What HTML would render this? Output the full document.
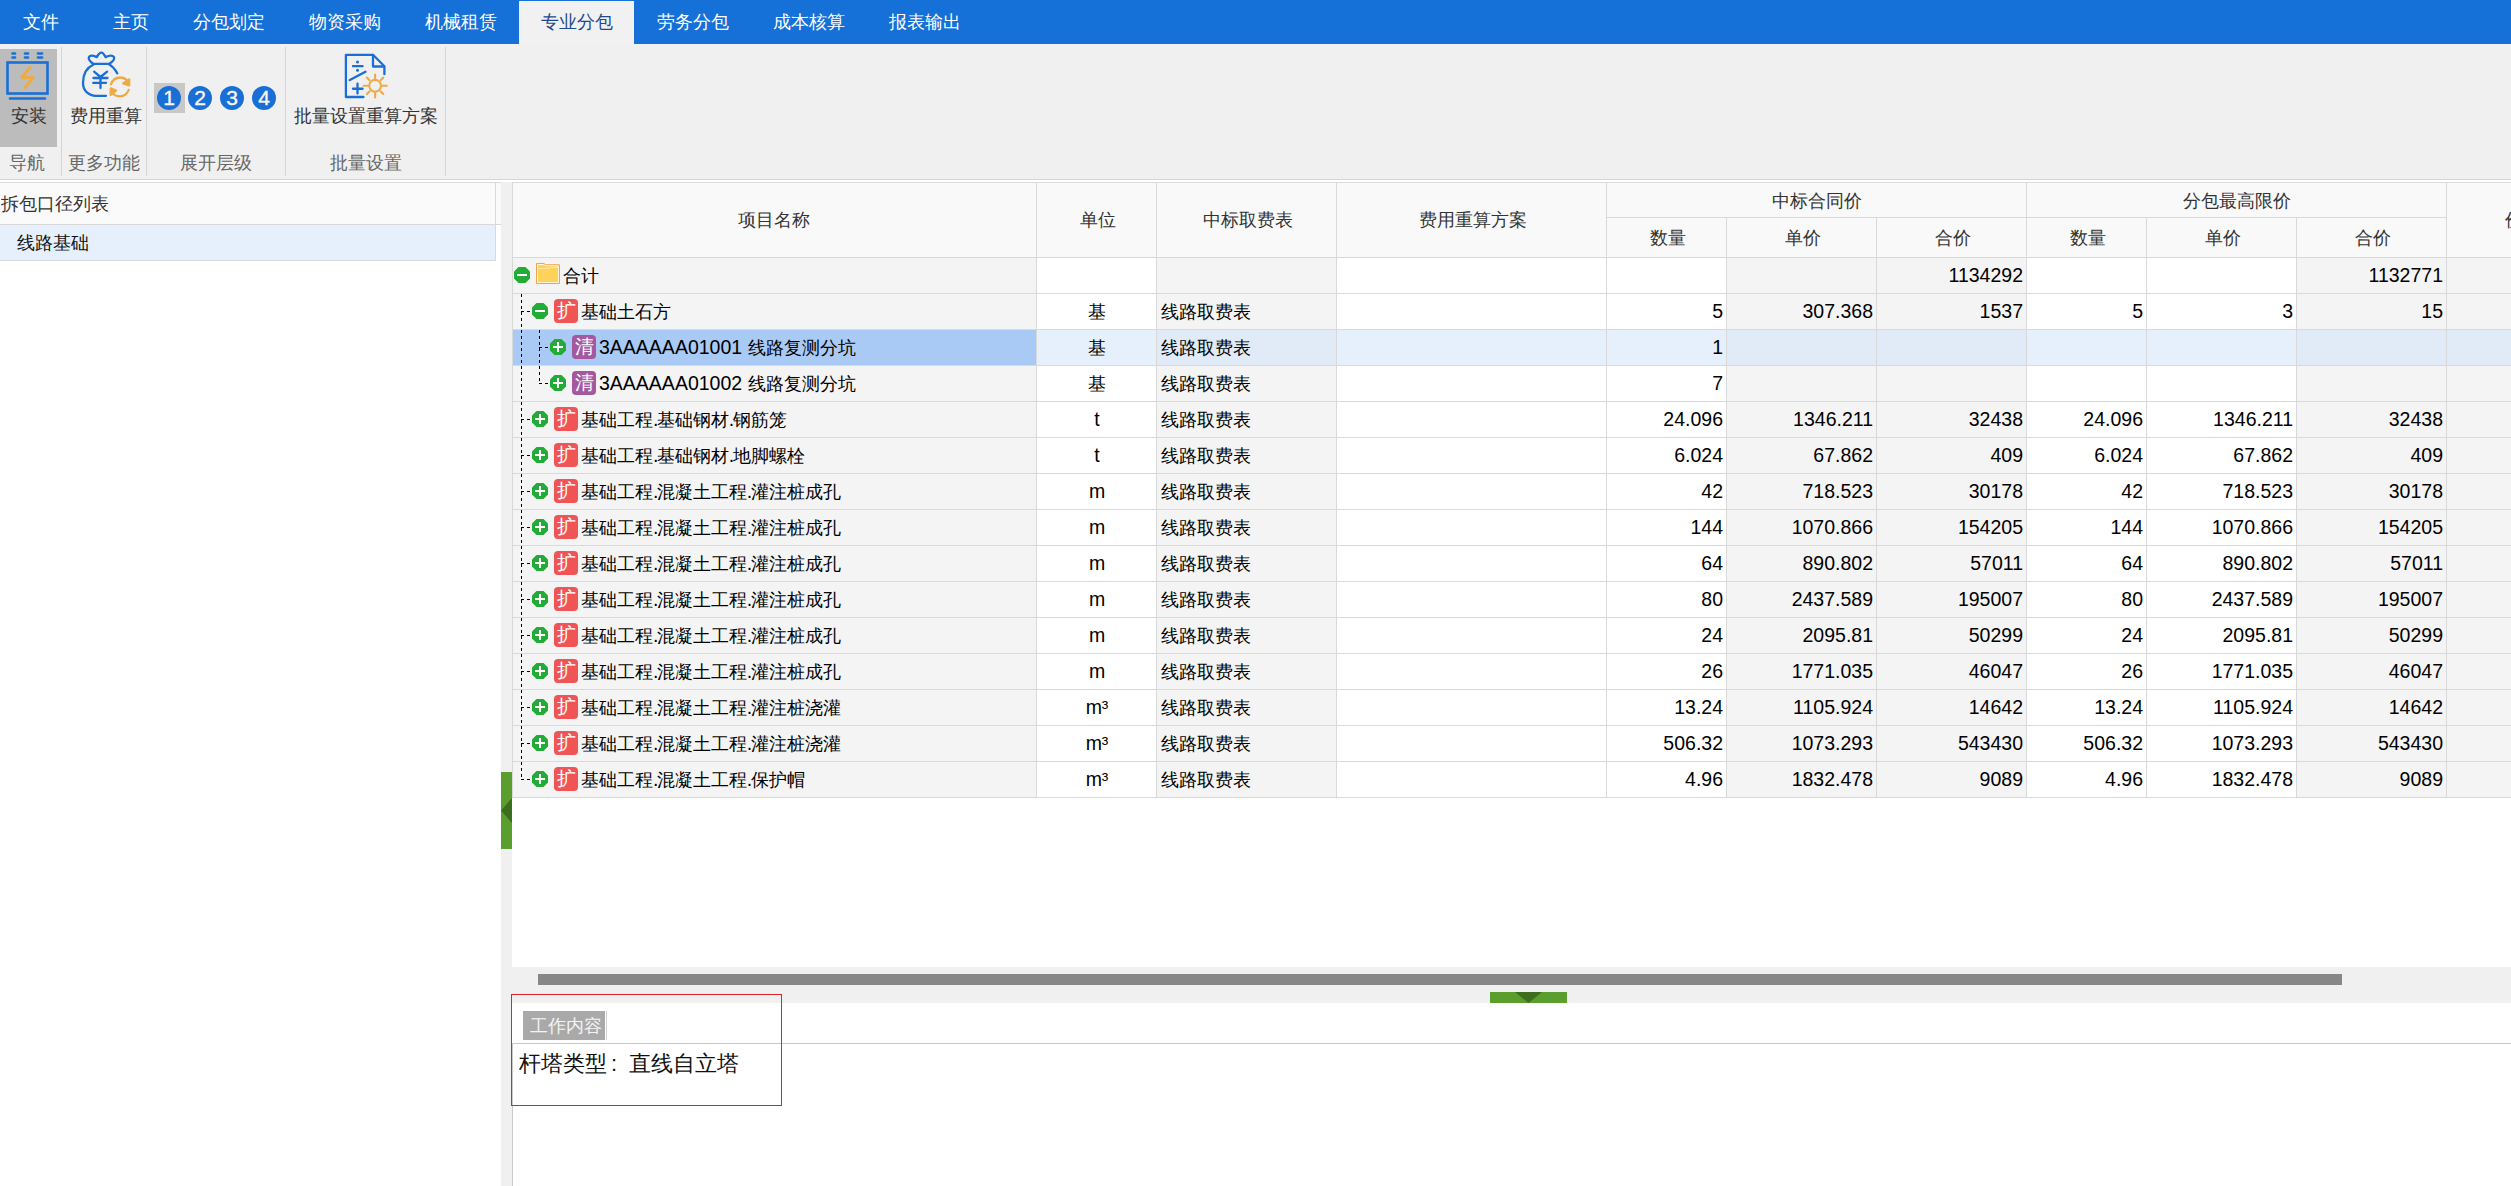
<!DOCTYPE html><html><head><meta charset="utf-8"><style>
html,body{margin:0;padding:0;}
body{width:2511px;height:1186px;overflow:hidden;position:relative;background:#fff;font-family:"Liberation Sans",sans-serif;font-size:19.5px;color:#000;}
body div{position:absolute;box-sizing:border-box;}
.t{white-space:nowrap;overflow:hidden;}
.c{font-size:18px;}
</style></head><body>
<div style="left:0px;top:0px;width:2511px;height:44px;background:#1570d8"></div>
<div style="left:519px;top:1px;width:115px;height:43px;background:#f1f1f1"></div>
<div class="t" style="left:-19px;top:3px;width:120px;height:36px;line-height:36px;text-align:center;color:#ffffff"><span class="c">文件</span></div>
<div class="t" style="left:71px;top:3px;width:120px;height:36px;line-height:36px;text-align:center;color:#ffffff"><span class="c">主页</span></div>
<div class="t" style="left:169px;top:3px;width:120px;height:36px;line-height:36px;text-align:center;color:#ffffff"><span class="c">分包划定</span></div>
<div class="t" style="left:285px;top:3px;width:120px;height:36px;line-height:36px;text-align:center;color:#ffffff"><span class="c">物资采购</span></div>
<div class="t" style="left:401px;top:3px;width:120px;height:36px;line-height:36px;text-align:center;color:#ffffff"><span class="c">机械租赁</span></div>
<div class="t" style="left:517px;top:3px;width:120px;height:36px;line-height:36px;text-align:center;color:#1f4a8e"><span class="c">专业分包</span></div>
<div class="t" style="left:633px;top:3px;width:120px;height:36px;line-height:36px;text-align:center;color:#ffffff"><span class="c">劳务分包</span></div>
<div class="t" style="left:749px;top:3px;width:120px;height:36px;line-height:36px;text-align:center;color:#ffffff"><span class="c">成本核算</span></div>
<div class="t" style="left:865px;top:3px;width:120px;height:36px;line-height:36px;text-align:center;color:#ffffff"><span class="c">报表输出</span></div>
<div style="left:0px;top:44px;width:2511px;height:135px;background:#f0f0f0"></div>
<div style="left:0px;top:179px;width:2511px;height:1px;background:#d6d6d6"></div>
<div style="left:61px;top:47px;width:1px;height:129px;background:#d5d5d5"></div>
<div style="left:146px;top:47px;width:1px;height:129px;background:#d5d5d5"></div>
<div style="left:285px;top:47px;width:1px;height:129px;background:#d5d5d5"></div>
<div style="left:445px;top:47px;width:1px;height:129px;background:#d5d5d5"></div>
<div style="left:0px;top:49px;width:57px;height:98px;background:#bcbcbc"></div>
<div class="t" style="left:0px;top:99px;width:57px;height:32px;line-height:32px;text-align:center;color:#333"><span class="c">安装</span></div>
<div class="t" style="left:64px;top:99px;width:84px;height:32px;line-height:32px;text-align:center;color:#333"><span class="c">费用重算</span></div>
<div class="t" style="left:286px;top:99px;width:159px;height:32px;line-height:32px;text-align:center;color:#333"><span class="c">批量设置重算方案</span></div>
<div class="t" style="left:-4px;top:146px;width:61px;height:32px;line-height:32px;text-align:center;color:#666"><span class="c">导航</span></div>
<div class="t" style="left:62px;top:146px;width:84px;height:32px;line-height:32px;text-align:center;color:#666"><span class="c">更多功能</span></div>
<div class="t" style="left:147px;top:146px;width:138px;height:32px;line-height:32px;text-align:center;color:#666"><span class="c">展开层级</span></div>
<div class="t" style="left:286px;top:146px;width:159px;height:32px;line-height:32px;text-align:center;color:#666"><span class="c">批量设置</span></div>
<div style="left:154px;top:83px;width:31px;height:30px;background:#c8c8c8"></div>
<div style="left:157px;top:86px;width:24px;height:24px;border-radius:12px;background:#1a6fd6;color:#fbf8f2;font-size:21px;line-height:23px;text-align:center;-webkit-text-stroke:0.35px #fbf8f2">1</div>
<div style="left:188px;top:86px;width:24px;height:24px;border-radius:12px;background:#1a6fd6;color:#fbf8f2;font-size:21px;line-height:23px;text-align:center;-webkit-text-stroke:0.35px #fbf8f2">2</div>
<div style="left:220px;top:86px;width:24px;height:24px;border-radius:12px;background:#1a6fd6;color:#fbf8f2;font-size:21px;line-height:23px;text-align:center;-webkit-text-stroke:0.35px #fbf8f2">3</div>
<div style="left:252px;top:86px;width:24px;height:24px;border-radius:12px;background:#1a6fd6;color:#fbf8f2;font-size:21px;line-height:23px;text-align:center;-webkit-text-stroke:0.35px #fbf8f2">4</div>
<svg style="position:absolute;left:0;top:44px" width="150" height="60" viewBox="0 0 150 60">
<g fill="none" stroke="#1a6fd6" stroke-width="2.6" stroke-linecap="round">
<line x1="12.5" y1="9.5" x2="15" y2="9.5"/><line x1="25" y1="9.5" x2="28" y2="9.5"/><line x1="38" y1="9.5" x2="42" y2="9.5"/>
<line x1="12.5" y1="13.5" x2="15" y2="13.5"/><line x1="25" y1="13.5" x2="28" y2="13.5"/><line x1="38" y1="13.5" x2="42" y2="13.5"/>
<rect x="7.5" y="18.5" width="40" height="31"/>
<line x1="10" y1="54.5" x2="45" y2="54.5"/>
</g>
<path d="M30 23.5 L21.8 33.5 L33.2 33.5 L25 43.5" fill="none" stroke="#eeaa44" stroke-width="2.8" stroke-linecap="round" stroke-linejoin="round"/>
</svg>
<svg style="position:absolute;left:70px;top:44px" width="75" height="60" viewBox="0 0 75 60">
<g fill="none" stroke="#1a6fd6" stroke-width="2.3" stroke-linecap="round" stroke-linejoin="round">
<path d="M23.2 19.8 C20 17.5 18 15 19 13 C20 11 23 11.5 26.8 13.1 C28.5 10 30 8.6 31.4 8.6 C32.8 8.6 34 10 35.5 13.1 C39 11.5 42.5 11 44 13.2 C45 15.5 42 18 39.3 19.8 Z"/>
<path d="M23.2 20.8 C16 24 13 31 13 39 C13 47 19 51.8 26 51.8 L36 51.8"/>
<path d="M39.6 20.8 C43 22.5 45 25.5 47.3 29.3"/>
<path d="M24.1 27.7 L30.5 33 L37.1 27.7 M30.5 33 L30.5 44 M23.4 34 L37.5 34 M23.2 38.8 L36 38.8"/>
</g>
<g fill="none" stroke="#eeaa44" stroke-width="2.3" stroke-linecap="round" stroke-linejoin="round">
<path d="M41 40.4 C42.5 36 46 33.5 50 33.5 C54 33.5 57 35.5 58.7 38.6"/>
<path d="M59.2 35.4 L59.2 41.3 L53.2 39.5 Z" fill="#eeaa44"/>
<path d="M58.7 45.9 C57 50 54 52.3 50 52.3 C46 52.3 43 50.5 41.3 47.5"/>
<path d="M40.8 44.3 L46 46.5 L40.6 50.8 Z" fill="#eeaa44"/>
</g>
</svg>
<svg style="position:absolute;left:330px;top:44px" width="75" height="60" viewBox="0 0 75 60">
<g fill="none" stroke="#1a6fd6" stroke-width="2.3" stroke-linecap="round" stroke-linejoin="round">
<path d="M33.5 53 L15.9 53 L15.9 10.8 L43 10.8 L54.4 22.2 L54.4 30.2"/>
<path d="M43 11 L43 22.5 L54 22.5"/>
<path d="M23 22.2 L32.6 22.2 M19.8 36.1 L35.5 27.7"/>
<path d="M23 44.75 L32.6 44.75 M27.5 39.7 L27.5 49.5"/>
</g>
<circle cx="27.5" cy="17.9" r="1.5" fill="#1a6fd6"/><circle cx="27.5" cy="26.3" r="1.5" fill="#1a6fd6"/>
<g fill="none" stroke="#eeaa44" stroke-width="2.1" stroke-linecap="round">
<circle cx="45.1" cy="41.8" r="5.9"/>
<path d="M45.1 30.5 V34.5 M45.1 49 V53.5 M33.5 41.8 H37.5 M52.7 41.8 H56.8 M36.9 33.6 L39.5 36.2 M50.7 47.4 L53.3 50 M53.3 33.6 L50.7 36.2 M39.5 47.4 L36.9 50"/>
</g>
</svg>
<div style="left:0px;top:182px;width:501px;height:1px;background:#d9d9d9"></div>
<div style="left:0px;top:183px;width:501px;height:41px;background:#fafafa"></div>
<div style="left:0px;top:224px;width:501px;height:1px;background:#d9d9d9"></div>
<div style="left:0px;top:225px;width:495px;height:35px;background:#e6f0fc"></div>
<div style="left:0px;top:260px;width:496px;height:1px;background:#d9d9d9"></div>
<div style="left:495px;top:183px;width:1px;height:77px;background:#d9d9d9"></div>
<div class="t" style="left:1px;top:183px;width:200px;height:41px;line-height:41px;color:#333"><span class="c">拆包口径列表</span></div>
<div class="t" style="left:17px;top:225px;width:200px;height:35px;line-height:35px;color:#111"><span class="c">线路基础</span></div>
<div style="left:501px;top:182px;width:11px;height:1004px;background:#f0f0f0"></div>
<div style="left:501px;top:772px;width:11px;height:77px;background:#5a9e2e"></div>
<svg style="position:absolute;left:501px;top:798px" width="11" height="25"><path d="M11 0 L0 12.5 L11 25Z" fill="#3c6e1e"/></svg>
<div style="left:512px;top:182px;width:1999px;height:785px;background:#fff"></div>
<div style="left:512px;top:182px;width:1999px;height:75px;background:#f9f9f9"></div>
<div style="left:512px;top:182px;width:1999px;height:1px;background:#d9d9d9"></div>
<div style="left:1606px;top:217px;width:840px;height:1px;background:#d9d9d9"></div>
<div style="left:512px;top:257px;width:1999px;height:1px;background:#d9d9d9"></div>
<div style="left:512px;top:182px;width:1px;height:75px;background:#d9d9d9"></div>
<div style="left:1036px;top:182px;width:1px;height:75px;background:#d9d9d9"></div>
<div style="left:1156px;top:182px;width:1px;height:75px;background:#d9d9d9"></div>
<div style="left:1336px;top:182px;width:1px;height:75px;background:#d9d9d9"></div>
<div style="left:1606px;top:182px;width:1px;height:75px;background:#d9d9d9"></div>
<div style="left:1726px;top:217px;width:1px;height:40px;background:#d9d9d9"></div>
<div style="left:1876px;top:217px;width:1px;height:40px;background:#d9d9d9"></div>
<div style="left:2026px;top:182px;width:1px;height:75px;background:#d9d9d9"></div>
<div style="left:2146px;top:217px;width:1px;height:40px;background:#d9d9d9"></div>
<div style="left:2296px;top:217px;width:1px;height:40px;background:#d9d9d9"></div>
<div style="left:2446px;top:182px;width:1px;height:75px;background:#d9d9d9"></div>
<div class="t" style="left:512px;top:182px;width:524px;height:75px;line-height:75px;color:#333;text-align:center"><span class="c">项目名称</span></div>
<div class="t" style="left:1038px;top:182px;width:120px;height:75px;line-height:75px;color:#333;text-align:center"><span class="c">单位</span></div>
<div class="t" style="left:1158px;top:182px;width:180px;height:75px;line-height:75px;color:#333;text-align:center"><span class="c">中标取费表</span></div>
<div class="t" style="left:1338px;top:182px;width:270px;height:75px;line-height:75px;color:#333;text-align:center"><span class="c">费用重算方案</span></div>
<div class="t" style="left:1607px;top:182px;width:420px;height:36px;line-height:36px;color:#333;text-align:center"><span class="c">中标合同价</span></div>
<div class="t" style="left:2027px;top:182px;width:420px;height:36px;line-height:36px;color:#333;text-align:center"><span class="c">分包最高限价</span></div>
<div class="t" style="left:1608px;top:217px;width:120px;height:40px;line-height:40px;color:#333;text-align:center"><span class="c">数量</span></div>
<div class="t" style="left:1728px;top:217px;width:150px;height:40px;line-height:40px;color:#333;text-align:center"><span class="c">单价</span></div>
<div class="t" style="left:1878px;top:217px;width:150px;height:40px;line-height:40px;color:#333;text-align:center"><span class="c">合价</span></div>
<div class="t" style="left:2028px;top:217px;width:120px;height:40px;line-height:40px;color:#333;text-align:center"><span class="c">数量</span></div>
<div class="t" style="left:2148px;top:217px;width:150px;height:40px;line-height:40px;color:#333;text-align:center"><span class="c">单价</span></div>
<div class="t" style="left:2298px;top:217px;width:150px;height:40px;line-height:40px;color:#333;text-align:center"><span class="c">合价</span></div>
<div class="t" style="left:2446px;top:182px;width:120px;height:75px;line-height:75px;color:#333;text-align:left;padding-left:59px"><span class="c">价</span></div>
<div style="left:513px;top:258px;width:523px;height:35px;background:#f4f4f4"></div>
<div style="left:1037px;top:258px;width:119px;height:35px;background:#ffffff"></div>
<div style="left:1157px;top:258px;width:179px;height:35px;background:#f4f4f4"></div>
<div style="left:1337px;top:258px;width:269px;height:35px;background:#ffffff"></div>
<div style="left:1607px;top:258px;width:119px;height:35px;background:#ffffff"></div>
<div style="left:1727px;top:258px;width:149px;height:35px;background:#f4f4f4"></div>
<div style="left:1877px;top:258px;width:149px;height:35px;background:#f4f4f4"></div>
<div style="left:2027px;top:258px;width:119px;height:35px;background:#ffffff"></div>
<div style="left:2147px;top:258px;width:149px;height:35px;background:#ffffff"></div>
<div style="left:2297px;top:258px;width:149px;height:35px;background:#f4f4f4"></div>
<div style="left:2447px;top:258px;width:64px;height:35px;background:#f4f4f4"></div>
<div style="left:512px;top:293px;width:1999px;height:1px;background:#d9d9d9"></div>
<div style="left:512px;top:257px;width:1px;height:37px;background:#d9d9d9"></div>
<div style="left:1036px;top:257px;width:1px;height:37px;background:#d9d9d9"></div>
<div style="left:1156px;top:257px;width:1px;height:37px;background:#d9d9d9"></div>
<div style="left:1336px;top:257px;width:1px;height:37px;background:#d9d9d9"></div>
<div style="left:1606px;top:257px;width:1px;height:37px;background:#d9d9d9"></div>
<div style="left:1726px;top:257px;width:1px;height:37px;background:#d9d9d9"></div>
<div style="left:1876px;top:257px;width:1px;height:37px;background:#d9d9d9"></div>
<div style="left:2026px;top:257px;width:1px;height:37px;background:#d9d9d9"></div>
<div style="left:2146px;top:257px;width:1px;height:37px;background:#d9d9d9"></div>
<div style="left:2296px;top:257px;width:1px;height:37px;background:#d9d9d9"></div>
<div style="left:2446px;top:257px;width:1px;height:37px;background:#d9d9d9"></div>
<svg style="position:absolute;left:514px;top:264px" width="18" height="22"><g transform="translate(0,3)"><polygon points="4.5,0 11.5,0 16,4.5 16,11.5 11.5,16 4.5,16 0,11.5 0,4.5" fill="#22ab37"/></g><rect x="3" y="10" width="10" height="2" fill="#fff"/></svg>
<svg style="position:absolute;left:536px;top:263px" width="24" height="22"><path d="M0.5 0.5 H8 L9.5 1.8 H23.5 V20.5 H0.5Z" fill="#ffd35a" stroke="#f0a24c" stroke-width="1"/><path d="M1.5 1.5 H7.6 L9.1 2.8 H22.5 V19.5 H1.5Z" fill="none" stroke="#fff6dc" stroke-width="1"/><path d="M2 5.5 H14 L15 4.5 H22" fill="none" stroke="#ffe9a0" stroke-width="1"/></svg>
<div class="t" style="left:563px;top:258px;width:300px;height:35px;line-height:35px;color:#000"><span class="c">合计</span></div>
<div class="t" style="left:1037px;top:258px;width:120px;height:35px;line-height:35px;text-align:center"></div>
<div class="t" style="left:1161px;top:258px;width:170px;height:35px;line-height:35px;"></div>
<div class="t" style="left:1876px;top:258px;width:147px;height:35px;line-height:35px;text-align:right">1134292</div>
<div class="t" style="left:2296px;top:258px;width:147px;height:35px;line-height:35px;text-align:right">1132771</div>
<div style="left:513px;top:294px;width:523px;height:35px;background:#f4f4f4"></div>
<div style="left:1037px;top:294px;width:119px;height:35px;background:#ffffff"></div>
<div style="left:1157px;top:294px;width:179px;height:35px;background:#f4f4f4"></div>
<div style="left:1337px;top:294px;width:269px;height:35px;background:#ffffff"></div>
<div style="left:1607px;top:294px;width:119px;height:35px;background:#ffffff"></div>
<div style="left:1727px;top:294px;width:149px;height:35px;background:#f4f4f4"></div>
<div style="left:1877px;top:294px;width:149px;height:35px;background:#f4f4f4"></div>
<div style="left:2027px;top:294px;width:119px;height:35px;background:#ffffff"></div>
<div style="left:2147px;top:294px;width:149px;height:35px;background:#ffffff"></div>
<div style="left:2297px;top:294px;width:149px;height:35px;background:#f4f4f4"></div>
<div style="left:2447px;top:294px;width:64px;height:35px;background:#f4f4f4"></div>
<div style="left:512px;top:329px;width:1999px;height:1px;background:#d9d9d9"></div>
<div style="left:512px;top:293px;width:1px;height:37px;background:#d9d9d9"></div>
<div style="left:1036px;top:293px;width:1px;height:37px;background:#d9d9d9"></div>
<div style="left:1156px;top:293px;width:1px;height:37px;background:#d9d9d9"></div>
<div style="left:1336px;top:293px;width:1px;height:37px;background:#d9d9d9"></div>
<div style="left:1606px;top:293px;width:1px;height:37px;background:#d9d9d9"></div>
<div style="left:1726px;top:293px;width:1px;height:37px;background:#d9d9d9"></div>
<div style="left:1876px;top:293px;width:1px;height:37px;background:#d9d9d9"></div>
<div style="left:2026px;top:293px;width:1px;height:37px;background:#d9d9d9"></div>
<div style="left:2146px;top:293px;width:1px;height:37px;background:#d9d9d9"></div>
<div style="left:2296px;top:293px;width:1px;height:37px;background:#d9d9d9"></div>
<div style="left:2446px;top:293px;width:1px;height:37px;background:#d9d9d9"></div>
<svg style="position:absolute;left:532px;top:300px" width="18" height="22"><g transform="translate(0,3)"><polygon points="4.5,0 11.5,0 16,4.5 16,11.5 11.5,16 4.5,16 0,11.5 0,4.5" fill="#22ab37"/></g><rect x="3" y="10" width="10" height="2" fill="#fff"/></svg>
<div style="left:554px;top:299px;width:24px;height:24px;border-radius:4px;background:#f05454;color:#fff;font-size:19px;line-height:24px;text-align:center">扩</div>
<div class="t" style="left:581px;top:294px;width:420px;height:35px;line-height:35px;color:#000"><span class="c">基础土石方</span></div>
<div class="t" style="left:1037px;top:294px;width:120px;height:35px;line-height:35px;text-align:center"><span class="c">基</span></div>
<div class="t" style="left:1161px;top:294px;width:170px;height:35px;line-height:35px;"><span class="c">线路取费表</span></div>
<div class="t" style="left:1606px;top:294px;width:117px;height:35px;line-height:35px;text-align:right">5</div>
<div class="t" style="left:1726px;top:294px;width:147px;height:35px;line-height:35px;text-align:right">307.368</div>
<div class="t" style="left:1876px;top:294px;width:147px;height:35px;line-height:35px;text-align:right">1537</div>
<div class="t" style="left:2026px;top:294px;width:117px;height:35px;line-height:35px;text-align:right">5</div>
<div class="t" style="left:2146px;top:294px;width:147px;height:35px;line-height:35px;text-align:right">3</div>
<div class="t" style="left:2296px;top:294px;width:147px;height:35px;line-height:35px;text-align:right">15</div>
<div style="left:513px;top:330px;width:523px;height:35px;background:#aacaf6"></div>
<div style="left:1037px;top:330px;width:119px;height:35px;background:#e6f0fc"></div>
<div style="left:1157px;top:330px;width:179px;height:35px;background:#e1eaf7"></div>
<div style="left:1337px;top:330px;width:269px;height:35px;background:#e6f0fc"></div>
<div style="left:1607px;top:330px;width:119px;height:35px;background:#e6f0fc"></div>
<div style="left:1727px;top:330px;width:149px;height:35px;background:#e1eaf7"></div>
<div style="left:1877px;top:330px;width:149px;height:35px;background:#e1eaf7"></div>
<div style="left:2027px;top:330px;width:119px;height:35px;background:#e6f0fc"></div>
<div style="left:2147px;top:330px;width:149px;height:35px;background:#e6f0fc"></div>
<div style="left:2297px;top:330px;width:149px;height:35px;background:#e1eaf7"></div>
<div style="left:2447px;top:330px;width:64px;height:35px;background:#e1eaf7"></div>
<div style="left:512px;top:365px;width:1999px;height:1px;background:#d9d9d9"></div>
<div style="left:512px;top:329px;width:1px;height:37px;background:#d9d9d9"></div>
<div style="left:1036px;top:329px;width:1px;height:37px;background:#d9d9d9"></div>
<div style="left:1156px;top:329px;width:1px;height:37px;background:#d9d9d9"></div>
<div style="left:1336px;top:329px;width:1px;height:37px;background:#d9d9d9"></div>
<div style="left:1606px;top:329px;width:1px;height:37px;background:#d9d9d9"></div>
<div style="left:1726px;top:329px;width:1px;height:37px;background:#d9d9d9"></div>
<div style="left:1876px;top:329px;width:1px;height:37px;background:#d9d9d9"></div>
<div style="left:2026px;top:329px;width:1px;height:37px;background:#d9d9d9"></div>
<div style="left:2146px;top:329px;width:1px;height:37px;background:#d9d9d9"></div>
<div style="left:2296px;top:329px;width:1px;height:37px;background:#d9d9d9"></div>
<div style="left:2446px;top:329px;width:1px;height:37px;background:#d9d9d9"></div>
<svg style="position:absolute;left:550px;top:336px" width="18" height="22"><g transform="translate(0,3)"><polygon points="4.5,0 11.5,0 16,4.5 16,11.5 11.5,16 4.5,16 0,11.5 0,4.5" fill="#22ab37"/></g><rect x="3" y="10" width="10" height="2" fill="#fff"/><rect x="7" y="6" width="2" height="10" fill="#fff"/></svg>
<div style="left:572px;top:335px;width:24px;height:24px;border-radius:4px;background:#a4589f;color:#fff;font-size:19px;line-height:24px;text-align:center">清</div>
<div class="t" style="left:599px;top:330px;width:420px;height:35px;line-height:35px;color:#000">3AAAAAA01001 <span class="c">线路复测分坑</span></div>
<div class="t" style="left:1037px;top:330px;width:120px;height:35px;line-height:35px;text-align:center"><span class="c">基</span></div>
<div class="t" style="left:1161px;top:330px;width:170px;height:35px;line-height:35px;"><span class="c">线路取费表</span></div>
<div class="t" style="left:1606px;top:330px;width:117px;height:35px;line-height:35px;text-align:right">1</div>
<div style="left:513px;top:366px;width:523px;height:35px;background:#f4f4f4"></div>
<div style="left:1037px;top:366px;width:119px;height:35px;background:#ffffff"></div>
<div style="left:1157px;top:366px;width:179px;height:35px;background:#f4f4f4"></div>
<div style="left:1337px;top:366px;width:269px;height:35px;background:#ffffff"></div>
<div style="left:1607px;top:366px;width:119px;height:35px;background:#ffffff"></div>
<div style="left:1727px;top:366px;width:149px;height:35px;background:#f4f4f4"></div>
<div style="left:1877px;top:366px;width:149px;height:35px;background:#f4f4f4"></div>
<div style="left:2027px;top:366px;width:119px;height:35px;background:#ffffff"></div>
<div style="left:2147px;top:366px;width:149px;height:35px;background:#ffffff"></div>
<div style="left:2297px;top:366px;width:149px;height:35px;background:#f4f4f4"></div>
<div style="left:2447px;top:366px;width:64px;height:35px;background:#f4f4f4"></div>
<div style="left:512px;top:401px;width:1999px;height:1px;background:#d9d9d9"></div>
<div style="left:512px;top:365px;width:1px;height:37px;background:#d9d9d9"></div>
<div style="left:1036px;top:365px;width:1px;height:37px;background:#d9d9d9"></div>
<div style="left:1156px;top:365px;width:1px;height:37px;background:#d9d9d9"></div>
<div style="left:1336px;top:365px;width:1px;height:37px;background:#d9d9d9"></div>
<div style="left:1606px;top:365px;width:1px;height:37px;background:#d9d9d9"></div>
<div style="left:1726px;top:365px;width:1px;height:37px;background:#d9d9d9"></div>
<div style="left:1876px;top:365px;width:1px;height:37px;background:#d9d9d9"></div>
<div style="left:2026px;top:365px;width:1px;height:37px;background:#d9d9d9"></div>
<div style="left:2146px;top:365px;width:1px;height:37px;background:#d9d9d9"></div>
<div style="left:2296px;top:365px;width:1px;height:37px;background:#d9d9d9"></div>
<div style="left:2446px;top:365px;width:1px;height:37px;background:#d9d9d9"></div>
<svg style="position:absolute;left:550px;top:372px" width="18" height="22"><g transform="translate(0,3)"><polygon points="4.5,0 11.5,0 16,4.5 16,11.5 11.5,16 4.5,16 0,11.5 0,4.5" fill="#22ab37"/></g><rect x="3" y="10" width="10" height="2" fill="#fff"/><rect x="7" y="6" width="2" height="10" fill="#fff"/></svg>
<div style="left:572px;top:371px;width:24px;height:24px;border-radius:4px;background:#a4589f;color:#fff;font-size:19px;line-height:24px;text-align:center">清</div>
<div class="t" style="left:599px;top:366px;width:420px;height:35px;line-height:35px;color:#000">3AAAAAA01002 <span class="c">线路复测分坑</span></div>
<div class="t" style="left:1037px;top:366px;width:120px;height:35px;line-height:35px;text-align:center"><span class="c">基</span></div>
<div class="t" style="left:1161px;top:366px;width:170px;height:35px;line-height:35px;"><span class="c">线路取费表</span></div>
<div class="t" style="left:1606px;top:366px;width:117px;height:35px;line-height:35px;text-align:right">7</div>
<div style="left:513px;top:402px;width:523px;height:35px;background:#f4f4f4"></div>
<div style="left:1037px;top:402px;width:119px;height:35px;background:#ffffff"></div>
<div style="left:1157px;top:402px;width:179px;height:35px;background:#f4f4f4"></div>
<div style="left:1337px;top:402px;width:269px;height:35px;background:#ffffff"></div>
<div style="left:1607px;top:402px;width:119px;height:35px;background:#ffffff"></div>
<div style="left:1727px;top:402px;width:149px;height:35px;background:#f4f4f4"></div>
<div style="left:1877px;top:402px;width:149px;height:35px;background:#f4f4f4"></div>
<div style="left:2027px;top:402px;width:119px;height:35px;background:#ffffff"></div>
<div style="left:2147px;top:402px;width:149px;height:35px;background:#ffffff"></div>
<div style="left:2297px;top:402px;width:149px;height:35px;background:#f4f4f4"></div>
<div style="left:2447px;top:402px;width:64px;height:35px;background:#f4f4f4"></div>
<div style="left:512px;top:437px;width:1999px;height:1px;background:#d9d9d9"></div>
<div style="left:512px;top:401px;width:1px;height:37px;background:#d9d9d9"></div>
<div style="left:1036px;top:401px;width:1px;height:37px;background:#d9d9d9"></div>
<div style="left:1156px;top:401px;width:1px;height:37px;background:#d9d9d9"></div>
<div style="left:1336px;top:401px;width:1px;height:37px;background:#d9d9d9"></div>
<div style="left:1606px;top:401px;width:1px;height:37px;background:#d9d9d9"></div>
<div style="left:1726px;top:401px;width:1px;height:37px;background:#d9d9d9"></div>
<div style="left:1876px;top:401px;width:1px;height:37px;background:#d9d9d9"></div>
<div style="left:2026px;top:401px;width:1px;height:37px;background:#d9d9d9"></div>
<div style="left:2146px;top:401px;width:1px;height:37px;background:#d9d9d9"></div>
<div style="left:2296px;top:401px;width:1px;height:37px;background:#d9d9d9"></div>
<div style="left:2446px;top:401px;width:1px;height:37px;background:#d9d9d9"></div>
<svg style="position:absolute;left:532px;top:408px" width="18" height="22"><g transform="translate(0,3)"><polygon points="4.5,0 11.5,0 16,4.5 16,11.5 11.5,16 4.5,16 0,11.5 0,4.5" fill="#22ab37"/></g><rect x="3" y="10" width="10" height="2" fill="#fff"/><rect x="7" y="6" width="2" height="10" fill="#fff"/></svg>
<div style="left:554px;top:407px;width:24px;height:24px;border-radius:4px;background:#f05454;color:#fff;font-size:19px;line-height:24px;text-align:center">扩</div>
<div class="t" style="left:581px;top:402px;width:420px;height:35px;line-height:35px;color:#000"><span class="c">基础工程</span><span style="letter-spacing:-1.6px">.</span><span class="c">基础钢材</span><span style="letter-spacing:-1.6px">.</span><span class="c">钢筋笼</span></div>
<div class="t" style="left:1037px;top:402px;width:120px;height:35px;line-height:35px;text-align:center">t</div>
<div class="t" style="left:1161px;top:402px;width:170px;height:35px;line-height:35px;"><span class="c">线路取费表</span></div>
<div class="t" style="left:1606px;top:402px;width:117px;height:35px;line-height:35px;text-align:right">24.096</div>
<div class="t" style="left:1726px;top:402px;width:147px;height:35px;line-height:35px;text-align:right">1346.211</div>
<div class="t" style="left:1876px;top:402px;width:147px;height:35px;line-height:35px;text-align:right">32438</div>
<div class="t" style="left:2026px;top:402px;width:117px;height:35px;line-height:35px;text-align:right">24.096</div>
<div class="t" style="left:2146px;top:402px;width:147px;height:35px;line-height:35px;text-align:right">1346.211</div>
<div class="t" style="left:2296px;top:402px;width:147px;height:35px;line-height:35px;text-align:right">32438</div>
<div style="left:513px;top:438px;width:523px;height:35px;background:#f4f4f4"></div>
<div style="left:1037px;top:438px;width:119px;height:35px;background:#ffffff"></div>
<div style="left:1157px;top:438px;width:179px;height:35px;background:#f4f4f4"></div>
<div style="left:1337px;top:438px;width:269px;height:35px;background:#ffffff"></div>
<div style="left:1607px;top:438px;width:119px;height:35px;background:#ffffff"></div>
<div style="left:1727px;top:438px;width:149px;height:35px;background:#f4f4f4"></div>
<div style="left:1877px;top:438px;width:149px;height:35px;background:#f4f4f4"></div>
<div style="left:2027px;top:438px;width:119px;height:35px;background:#ffffff"></div>
<div style="left:2147px;top:438px;width:149px;height:35px;background:#ffffff"></div>
<div style="left:2297px;top:438px;width:149px;height:35px;background:#f4f4f4"></div>
<div style="left:2447px;top:438px;width:64px;height:35px;background:#f4f4f4"></div>
<div style="left:512px;top:473px;width:1999px;height:1px;background:#d9d9d9"></div>
<div style="left:512px;top:437px;width:1px;height:37px;background:#d9d9d9"></div>
<div style="left:1036px;top:437px;width:1px;height:37px;background:#d9d9d9"></div>
<div style="left:1156px;top:437px;width:1px;height:37px;background:#d9d9d9"></div>
<div style="left:1336px;top:437px;width:1px;height:37px;background:#d9d9d9"></div>
<div style="left:1606px;top:437px;width:1px;height:37px;background:#d9d9d9"></div>
<div style="left:1726px;top:437px;width:1px;height:37px;background:#d9d9d9"></div>
<div style="left:1876px;top:437px;width:1px;height:37px;background:#d9d9d9"></div>
<div style="left:2026px;top:437px;width:1px;height:37px;background:#d9d9d9"></div>
<div style="left:2146px;top:437px;width:1px;height:37px;background:#d9d9d9"></div>
<div style="left:2296px;top:437px;width:1px;height:37px;background:#d9d9d9"></div>
<div style="left:2446px;top:437px;width:1px;height:37px;background:#d9d9d9"></div>
<svg style="position:absolute;left:532px;top:444px" width="18" height="22"><g transform="translate(0,3)"><polygon points="4.5,0 11.5,0 16,4.5 16,11.5 11.5,16 4.5,16 0,11.5 0,4.5" fill="#22ab37"/></g><rect x="3" y="10" width="10" height="2" fill="#fff"/><rect x="7" y="6" width="2" height="10" fill="#fff"/></svg>
<div style="left:554px;top:443px;width:24px;height:24px;border-radius:4px;background:#f05454;color:#fff;font-size:19px;line-height:24px;text-align:center">扩</div>
<div class="t" style="left:581px;top:438px;width:420px;height:35px;line-height:35px;color:#000"><span class="c">基础工程</span><span style="letter-spacing:-1.6px">.</span><span class="c">基础钢材</span><span style="letter-spacing:-1.6px">.</span><span class="c">地脚螺栓</span></div>
<div class="t" style="left:1037px;top:438px;width:120px;height:35px;line-height:35px;text-align:center">t</div>
<div class="t" style="left:1161px;top:438px;width:170px;height:35px;line-height:35px;"><span class="c">线路取费表</span></div>
<div class="t" style="left:1606px;top:438px;width:117px;height:35px;line-height:35px;text-align:right">6.024</div>
<div class="t" style="left:1726px;top:438px;width:147px;height:35px;line-height:35px;text-align:right">67.862</div>
<div class="t" style="left:1876px;top:438px;width:147px;height:35px;line-height:35px;text-align:right">409</div>
<div class="t" style="left:2026px;top:438px;width:117px;height:35px;line-height:35px;text-align:right">6.024</div>
<div class="t" style="left:2146px;top:438px;width:147px;height:35px;line-height:35px;text-align:right">67.862</div>
<div class="t" style="left:2296px;top:438px;width:147px;height:35px;line-height:35px;text-align:right">409</div>
<div style="left:513px;top:474px;width:523px;height:35px;background:#f4f4f4"></div>
<div style="left:1037px;top:474px;width:119px;height:35px;background:#ffffff"></div>
<div style="left:1157px;top:474px;width:179px;height:35px;background:#f4f4f4"></div>
<div style="left:1337px;top:474px;width:269px;height:35px;background:#ffffff"></div>
<div style="left:1607px;top:474px;width:119px;height:35px;background:#ffffff"></div>
<div style="left:1727px;top:474px;width:149px;height:35px;background:#f4f4f4"></div>
<div style="left:1877px;top:474px;width:149px;height:35px;background:#f4f4f4"></div>
<div style="left:2027px;top:474px;width:119px;height:35px;background:#ffffff"></div>
<div style="left:2147px;top:474px;width:149px;height:35px;background:#ffffff"></div>
<div style="left:2297px;top:474px;width:149px;height:35px;background:#f4f4f4"></div>
<div style="left:2447px;top:474px;width:64px;height:35px;background:#f4f4f4"></div>
<div style="left:512px;top:509px;width:1999px;height:1px;background:#d9d9d9"></div>
<div style="left:512px;top:473px;width:1px;height:37px;background:#d9d9d9"></div>
<div style="left:1036px;top:473px;width:1px;height:37px;background:#d9d9d9"></div>
<div style="left:1156px;top:473px;width:1px;height:37px;background:#d9d9d9"></div>
<div style="left:1336px;top:473px;width:1px;height:37px;background:#d9d9d9"></div>
<div style="left:1606px;top:473px;width:1px;height:37px;background:#d9d9d9"></div>
<div style="left:1726px;top:473px;width:1px;height:37px;background:#d9d9d9"></div>
<div style="left:1876px;top:473px;width:1px;height:37px;background:#d9d9d9"></div>
<div style="left:2026px;top:473px;width:1px;height:37px;background:#d9d9d9"></div>
<div style="left:2146px;top:473px;width:1px;height:37px;background:#d9d9d9"></div>
<div style="left:2296px;top:473px;width:1px;height:37px;background:#d9d9d9"></div>
<div style="left:2446px;top:473px;width:1px;height:37px;background:#d9d9d9"></div>
<svg style="position:absolute;left:532px;top:480px" width="18" height="22"><g transform="translate(0,3)"><polygon points="4.5,0 11.5,0 16,4.5 16,11.5 11.5,16 4.5,16 0,11.5 0,4.5" fill="#22ab37"/></g><rect x="3" y="10" width="10" height="2" fill="#fff"/><rect x="7" y="6" width="2" height="10" fill="#fff"/></svg>
<div style="left:554px;top:479px;width:24px;height:24px;border-radius:4px;background:#f05454;color:#fff;font-size:19px;line-height:24px;text-align:center">扩</div>
<div class="t" style="left:581px;top:474px;width:420px;height:35px;line-height:35px;color:#000"><span class="c">基础工程</span><span style="letter-spacing:-1.6px">.</span><span class="c">混凝土工程</span><span style="letter-spacing:-1.6px">.</span><span class="c">灌注桩成孔</span></div>
<div class="t" style="left:1037px;top:474px;width:120px;height:35px;line-height:35px;text-align:center">m</div>
<div class="t" style="left:1161px;top:474px;width:170px;height:35px;line-height:35px;"><span class="c">线路取费表</span></div>
<div class="t" style="left:1606px;top:474px;width:117px;height:35px;line-height:35px;text-align:right">42</div>
<div class="t" style="left:1726px;top:474px;width:147px;height:35px;line-height:35px;text-align:right">718.523</div>
<div class="t" style="left:1876px;top:474px;width:147px;height:35px;line-height:35px;text-align:right">30178</div>
<div class="t" style="left:2026px;top:474px;width:117px;height:35px;line-height:35px;text-align:right">42</div>
<div class="t" style="left:2146px;top:474px;width:147px;height:35px;line-height:35px;text-align:right">718.523</div>
<div class="t" style="left:2296px;top:474px;width:147px;height:35px;line-height:35px;text-align:right">30178</div>
<div style="left:513px;top:510px;width:523px;height:35px;background:#f4f4f4"></div>
<div style="left:1037px;top:510px;width:119px;height:35px;background:#ffffff"></div>
<div style="left:1157px;top:510px;width:179px;height:35px;background:#f4f4f4"></div>
<div style="left:1337px;top:510px;width:269px;height:35px;background:#ffffff"></div>
<div style="left:1607px;top:510px;width:119px;height:35px;background:#ffffff"></div>
<div style="left:1727px;top:510px;width:149px;height:35px;background:#f4f4f4"></div>
<div style="left:1877px;top:510px;width:149px;height:35px;background:#f4f4f4"></div>
<div style="left:2027px;top:510px;width:119px;height:35px;background:#ffffff"></div>
<div style="left:2147px;top:510px;width:149px;height:35px;background:#ffffff"></div>
<div style="left:2297px;top:510px;width:149px;height:35px;background:#f4f4f4"></div>
<div style="left:2447px;top:510px;width:64px;height:35px;background:#f4f4f4"></div>
<div style="left:512px;top:545px;width:1999px;height:1px;background:#d9d9d9"></div>
<div style="left:512px;top:509px;width:1px;height:37px;background:#d9d9d9"></div>
<div style="left:1036px;top:509px;width:1px;height:37px;background:#d9d9d9"></div>
<div style="left:1156px;top:509px;width:1px;height:37px;background:#d9d9d9"></div>
<div style="left:1336px;top:509px;width:1px;height:37px;background:#d9d9d9"></div>
<div style="left:1606px;top:509px;width:1px;height:37px;background:#d9d9d9"></div>
<div style="left:1726px;top:509px;width:1px;height:37px;background:#d9d9d9"></div>
<div style="left:1876px;top:509px;width:1px;height:37px;background:#d9d9d9"></div>
<div style="left:2026px;top:509px;width:1px;height:37px;background:#d9d9d9"></div>
<div style="left:2146px;top:509px;width:1px;height:37px;background:#d9d9d9"></div>
<div style="left:2296px;top:509px;width:1px;height:37px;background:#d9d9d9"></div>
<div style="left:2446px;top:509px;width:1px;height:37px;background:#d9d9d9"></div>
<svg style="position:absolute;left:532px;top:516px" width="18" height="22"><g transform="translate(0,3)"><polygon points="4.5,0 11.5,0 16,4.5 16,11.5 11.5,16 4.5,16 0,11.5 0,4.5" fill="#22ab37"/></g><rect x="3" y="10" width="10" height="2" fill="#fff"/><rect x="7" y="6" width="2" height="10" fill="#fff"/></svg>
<div style="left:554px;top:515px;width:24px;height:24px;border-radius:4px;background:#f05454;color:#fff;font-size:19px;line-height:24px;text-align:center">扩</div>
<div class="t" style="left:581px;top:510px;width:420px;height:35px;line-height:35px;color:#000"><span class="c">基础工程</span><span style="letter-spacing:-1.6px">.</span><span class="c">混凝土工程</span><span style="letter-spacing:-1.6px">.</span><span class="c">灌注桩成孔</span></div>
<div class="t" style="left:1037px;top:510px;width:120px;height:35px;line-height:35px;text-align:center">m</div>
<div class="t" style="left:1161px;top:510px;width:170px;height:35px;line-height:35px;"><span class="c">线路取费表</span></div>
<div class="t" style="left:1606px;top:510px;width:117px;height:35px;line-height:35px;text-align:right">144</div>
<div class="t" style="left:1726px;top:510px;width:147px;height:35px;line-height:35px;text-align:right">1070.866</div>
<div class="t" style="left:1876px;top:510px;width:147px;height:35px;line-height:35px;text-align:right">154205</div>
<div class="t" style="left:2026px;top:510px;width:117px;height:35px;line-height:35px;text-align:right">144</div>
<div class="t" style="left:2146px;top:510px;width:147px;height:35px;line-height:35px;text-align:right">1070.866</div>
<div class="t" style="left:2296px;top:510px;width:147px;height:35px;line-height:35px;text-align:right">154205</div>
<div style="left:513px;top:546px;width:523px;height:35px;background:#f4f4f4"></div>
<div style="left:1037px;top:546px;width:119px;height:35px;background:#ffffff"></div>
<div style="left:1157px;top:546px;width:179px;height:35px;background:#f4f4f4"></div>
<div style="left:1337px;top:546px;width:269px;height:35px;background:#ffffff"></div>
<div style="left:1607px;top:546px;width:119px;height:35px;background:#ffffff"></div>
<div style="left:1727px;top:546px;width:149px;height:35px;background:#f4f4f4"></div>
<div style="left:1877px;top:546px;width:149px;height:35px;background:#f4f4f4"></div>
<div style="left:2027px;top:546px;width:119px;height:35px;background:#ffffff"></div>
<div style="left:2147px;top:546px;width:149px;height:35px;background:#ffffff"></div>
<div style="left:2297px;top:546px;width:149px;height:35px;background:#f4f4f4"></div>
<div style="left:2447px;top:546px;width:64px;height:35px;background:#f4f4f4"></div>
<div style="left:512px;top:581px;width:1999px;height:1px;background:#d9d9d9"></div>
<div style="left:512px;top:545px;width:1px;height:37px;background:#d9d9d9"></div>
<div style="left:1036px;top:545px;width:1px;height:37px;background:#d9d9d9"></div>
<div style="left:1156px;top:545px;width:1px;height:37px;background:#d9d9d9"></div>
<div style="left:1336px;top:545px;width:1px;height:37px;background:#d9d9d9"></div>
<div style="left:1606px;top:545px;width:1px;height:37px;background:#d9d9d9"></div>
<div style="left:1726px;top:545px;width:1px;height:37px;background:#d9d9d9"></div>
<div style="left:1876px;top:545px;width:1px;height:37px;background:#d9d9d9"></div>
<div style="left:2026px;top:545px;width:1px;height:37px;background:#d9d9d9"></div>
<div style="left:2146px;top:545px;width:1px;height:37px;background:#d9d9d9"></div>
<div style="left:2296px;top:545px;width:1px;height:37px;background:#d9d9d9"></div>
<div style="left:2446px;top:545px;width:1px;height:37px;background:#d9d9d9"></div>
<svg style="position:absolute;left:532px;top:552px" width="18" height="22"><g transform="translate(0,3)"><polygon points="4.5,0 11.5,0 16,4.5 16,11.5 11.5,16 4.5,16 0,11.5 0,4.5" fill="#22ab37"/></g><rect x="3" y="10" width="10" height="2" fill="#fff"/><rect x="7" y="6" width="2" height="10" fill="#fff"/></svg>
<div style="left:554px;top:551px;width:24px;height:24px;border-radius:4px;background:#f05454;color:#fff;font-size:19px;line-height:24px;text-align:center">扩</div>
<div class="t" style="left:581px;top:546px;width:420px;height:35px;line-height:35px;color:#000"><span class="c">基础工程</span><span style="letter-spacing:-1.6px">.</span><span class="c">混凝土工程</span><span style="letter-spacing:-1.6px">.</span><span class="c">灌注桩成孔</span></div>
<div class="t" style="left:1037px;top:546px;width:120px;height:35px;line-height:35px;text-align:center">m</div>
<div class="t" style="left:1161px;top:546px;width:170px;height:35px;line-height:35px;"><span class="c">线路取费表</span></div>
<div class="t" style="left:1606px;top:546px;width:117px;height:35px;line-height:35px;text-align:right">64</div>
<div class="t" style="left:1726px;top:546px;width:147px;height:35px;line-height:35px;text-align:right">890.802</div>
<div class="t" style="left:1876px;top:546px;width:147px;height:35px;line-height:35px;text-align:right">57011</div>
<div class="t" style="left:2026px;top:546px;width:117px;height:35px;line-height:35px;text-align:right">64</div>
<div class="t" style="left:2146px;top:546px;width:147px;height:35px;line-height:35px;text-align:right">890.802</div>
<div class="t" style="left:2296px;top:546px;width:147px;height:35px;line-height:35px;text-align:right">57011</div>
<div style="left:513px;top:582px;width:523px;height:35px;background:#f4f4f4"></div>
<div style="left:1037px;top:582px;width:119px;height:35px;background:#ffffff"></div>
<div style="left:1157px;top:582px;width:179px;height:35px;background:#f4f4f4"></div>
<div style="left:1337px;top:582px;width:269px;height:35px;background:#ffffff"></div>
<div style="left:1607px;top:582px;width:119px;height:35px;background:#ffffff"></div>
<div style="left:1727px;top:582px;width:149px;height:35px;background:#f4f4f4"></div>
<div style="left:1877px;top:582px;width:149px;height:35px;background:#f4f4f4"></div>
<div style="left:2027px;top:582px;width:119px;height:35px;background:#ffffff"></div>
<div style="left:2147px;top:582px;width:149px;height:35px;background:#ffffff"></div>
<div style="left:2297px;top:582px;width:149px;height:35px;background:#f4f4f4"></div>
<div style="left:2447px;top:582px;width:64px;height:35px;background:#f4f4f4"></div>
<div style="left:512px;top:617px;width:1999px;height:1px;background:#d9d9d9"></div>
<div style="left:512px;top:581px;width:1px;height:37px;background:#d9d9d9"></div>
<div style="left:1036px;top:581px;width:1px;height:37px;background:#d9d9d9"></div>
<div style="left:1156px;top:581px;width:1px;height:37px;background:#d9d9d9"></div>
<div style="left:1336px;top:581px;width:1px;height:37px;background:#d9d9d9"></div>
<div style="left:1606px;top:581px;width:1px;height:37px;background:#d9d9d9"></div>
<div style="left:1726px;top:581px;width:1px;height:37px;background:#d9d9d9"></div>
<div style="left:1876px;top:581px;width:1px;height:37px;background:#d9d9d9"></div>
<div style="left:2026px;top:581px;width:1px;height:37px;background:#d9d9d9"></div>
<div style="left:2146px;top:581px;width:1px;height:37px;background:#d9d9d9"></div>
<div style="left:2296px;top:581px;width:1px;height:37px;background:#d9d9d9"></div>
<div style="left:2446px;top:581px;width:1px;height:37px;background:#d9d9d9"></div>
<svg style="position:absolute;left:532px;top:588px" width="18" height="22"><g transform="translate(0,3)"><polygon points="4.5,0 11.5,0 16,4.5 16,11.5 11.5,16 4.5,16 0,11.5 0,4.5" fill="#22ab37"/></g><rect x="3" y="10" width="10" height="2" fill="#fff"/><rect x="7" y="6" width="2" height="10" fill="#fff"/></svg>
<div style="left:554px;top:587px;width:24px;height:24px;border-radius:4px;background:#f05454;color:#fff;font-size:19px;line-height:24px;text-align:center">扩</div>
<div class="t" style="left:581px;top:582px;width:420px;height:35px;line-height:35px;color:#000"><span class="c">基础工程</span><span style="letter-spacing:-1.6px">.</span><span class="c">混凝土工程</span><span style="letter-spacing:-1.6px">.</span><span class="c">灌注桩成孔</span></div>
<div class="t" style="left:1037px;top:582px;width:120px;height:35px;line-height:35px;text-align:center">m</div>
<div class="t" style="left:1161px;top:582px;width:170px;height:35px;line-height:35px;"><span class="c">线路取费表</span></div>
<div class="t" style="left:1606px;top:582px;width:117px;height:35px;line-height:35px;text-align:right">80</div>
<div class="t" style="left:1726px;top:582px;width:147px;height:35px;line-height:35px;text-align:right">2437.589</div>
<div class="t" style="left:1876px;top:582px;width:147px;height:35px;line-height:35px;text-align:right">195007</div>
<div class="t" style="left:2026px;top:582px;width:117px;height:35px;line-height:35px;text-align:right">80</div>
<div class="t" style="left:2146px;top:582px;width:147px;height:35px;line-height:35px;text-align:right">2437.589</div>
<div class="t" style="left:2296px;top:582px;width:147px;height:35px;line-height:35px;text-align:right">195007</div>
<div style="left:513px;top:618px;width:523px;height:35px;background:#f4f4f4"></div>
<div style="left:1037px;top:618px;width:119px;height:35px;background:#ffffff"></div>
<div style="left:1157px;top:618px;width:179px;height:35px;background:#f4f4f4"></div>
<div style="left:1337px;top:618px;width:269px;height:35px;background:#ffffff"></div>
<div style="left:1607px;top:618px;width:119px;height:35px;background:#ffffff"></div>
<div style="left:1727px;top:618px;width:149px;height:35px;background:#f4f4f4"></div>
<div style="left:1877px;top:618px;width:149px;height:35px;background:#f4f4f4"></div>
<div style="left:2027px;top:618px;width:119px;height:35px;background:#ffffff"></div>
<div style="left:2147px;top:618px;width:149px;height:35px;background:#ffffff"></div>
<div style="left:2297px;top:618px;width:149px;height:35px;background:#f4f4f4"></div>
<div style="left:2447px;top:618px;width:64px;height:35px;background:#f4f4f4"></div>
<div style="left:512px;top:653px;width:1999px;height:1px;background:#d9d9d9"></div>
<div style="left:512px;top:617px;width:1px;height:37px;background:#d9d9d9"></div>
<div style="left:1036px;top:617px;width:1px;height:37px;background:#d9d9d9"></div>
<div style="left:1156px;top:617px;width:1px;height:37px;background:#d9d9d9"></div>
<div style="left:1336px;top:617px;width:1px;height:37px;background:#d9d9d9"></div>
<div style="left:1606px;top:617px;width:1px;height:37px;background:#d9d9d9"></div>
<div style="left:1726px;top:617px;width:1px;height:37px;background:#d9d9d9"></div>
<div style="left:1876px;top:617px;width:1px;height:37px;background:#d9d9d9"></div>
<div style="left:2026px;top:617px;width:1px;height:37px;background:#d9d9d9"></div>
<div style="left:2146px;top:617px;width:1px;height:37px;background:#d9d9d9"></div>
<div style="left:2296px;top:617px;width:1px;height:37px;background:#d9d9d9"></div>
<div style="left:2446px;top:617px;width:1px;height:37px;background:#d9d9d9"></div>
<svg style="position:absolute;left:532px;top:624px" width="18" height="22"><g transform="translate(0,3)"><polygon points="4.5,0 11.5,0 16,4.5 16,11.5 11.5,16 4.5,16 0,11.5 0,4.5" fill="#22ab37"/></g><rect x="3" y="10" width="10" height="2" fill="#fff"/><rect x="7" y="6" width="2" height="10" fill="#fff"/></svg>
<div style="left:554px;top:623px;width:24px;height:24px;border-radius:4px;background:#f05454;color:#fff;font-size:19px;line-height:24px;text-align:center">扩</div>
<div class="t" style="left:581px;top:618px;width:420px;height:35px;line-height:35px;color:#000"><span class="c">基础工程</span><span style="letter-spacing:-1.6px">.</span><span class="c">混凝土工程</span><span style="letter-spacing:-1.6px">.</span><span class="c">灌注桩成孔</span></div>
<div class="t" style="left:1037px;top:618px;width:120px;height:35px;line-height:35px;text-align:center">m</div>
<div class="t" style="left:1161px;top:618px;width:170px;height:35px;line-height:35px;"><span class="c">线路取费表</span></div>
<div class="t" style="left:1606px;top:618px;width:117px;height:35px;line-height:35px;text-align:right">24</div>
<div class="t" style="left:1726px;top:618px;width:147px;height:35px;line-height:35px;text-align:right">2095.81</div>
<div class="t" style="left:1876px;top:618px;width:147px;height:35px;line-height:35px;text-align:right">50299</div>
<div class="t" style="left:2026px;top:618px;width:117px;height:35px;line-height:35px;text-align:right">24</div>
<div class="t" style="left:2146px;top:618px;width:147px;height:35px;line-height:35px;text-align:right">2095.81</div>
<div class="t" style="left:2296px;top:618px;width:147px;height:35px;line-height:35px;text-align:right">50299</div>
<div style="left:513px;top:654px;width:523px;height:35px;background:#f4f4f4"></div>
<div style="left:1037px;top:654px;width:119px;height:35px;background:#ffffff"></div>
<div style="left:1157px;top:654px;width:179px;height:35px;background:#f4f4f4"></div>
<div style="left:1337px;top:654px;width:269px;height:35px;background:#ffffff"></div>
<div style="left:1607px;top:654px;width:119px;height:35px;background:#ffffff"></div>
<div style="left:1727px;top:654px;width:149px;height:35px;background:#f4f4f4"></div>
<div style="left:1877px;top:654px;width:149px;height:35px;background:#f4f4f4"></div>
<div style="left:2027px;top:654px;width:119px;height:35px;background:#ffffff"></div>
<div style="left:2147px;top:654px;width:149px;height:35px;background:#ffffff"></div>
<div style="left:2297px;top:654px;width:149px;height:35px;background:#f4f4f4"></div>
<div style="left:2447px;top:654px;width:64px;height:35px;background:#f4f4f4"></div>
<div style="left:512px;top:689px;width:1999px;height:1px;background:#d9d9d9"></div>
<div style="left:512px;top:653px;width:1px;height:37px;background:#d9d9d9"></div>
<div style="left:1036px;top:653px;width:1px;height:37px;background:#d9d9d9"></div>
<div style="left:1156px;top:653px;width:1px;height:37px;background:#d9d9d9"></div>
<div style="left:1336px;top:653px;width:1px;height:37px;background:#d9d9d9"></div>
<div style="left:1606px;top:653px;width:1px;height:37px;background:#d9d9d9"></div>
<div style="left:1726px;top:653px;width:1px;height:37px;background:#d9d9d9"></div>
<div style="left:1876px;top:653px;width:1px;height:37px;background:#d9d9d9"></div>
<div style="left:2026px;top:653px;width:1px;height:37px;background:#d9d9d9"></div>
<div style="left:2146px;top:653px;width:1px;height:37px;background:#d9d9d9"></div>
<div style="left:2296px;top:653px;width:1px;height:37px;background:#d9d9d9"></div>
<div style="left:2446px;top:653px;width:1px;height:37px;background:#d9d9d9"></div>
<svg style="position:absolute;left:532px;top:660px" width="18" height="22"><g transform="translate(0,3)"><polygon points="4.5,0 11.5,0 16,4.5 16,11.5 11.5,16 4.5,16 0,11.5 0,4.5" fill="#22ab37"/></g><rect x="3" y="10" width="10" height="2" fill="#fff"/><rect x="7" y="6" width="2" height="10" fill="#fff"/></svg>
<div style="left:554px;top:659px;width:24px;height:24px;border-radius:4px;background:#f05454;color:#fff;font-size:19px;line-height:24px;text-align:center">扩</div>
<div class="t" style="left:581px;top:654px;width:420px;height:35px;line-height:35px;color:#000"><span class="c">基础工程</span><span style="letter-spacing:-1.6px">.</span><span class="c">混凝土工程</span><span style="letter-spacing:-1.6px">.</span><span class="c">灌注桩成孔</span></div>
<div class="t" style="left:1037px;top:654px;width:120px;height:35px;line-height:35px;text-align:center">m</div>
<div class="t" style="left:1161px;top:654px;width:170px;height:35px;line-height:35px;"><span class="c">线路取费表</span></div>
<div class="t" style="left:1606px;top:654px;width:117px;height:35px;line-height:35px;text-align:right">26</div>
<div class="t" style="left:1726px;top:654px;width:147px;height:35px;line-height:35px;text-align:right">1771.035</div>
<div class="t" style="left:1876px;top:654px;width:147px;height:35px;line-height:35px;text-align:right">46047</div>
<div class="t" style="left:2026px;top:654px;width:117px;height:35px;line-height:35px;text-align:right">26</div>
<div class="t" style="left:2146px;top:654px;width:147px;height:35px;line-height:35px;text-align:right">1771.035</div>
<div class="t" style="left:2296px;top:654px;width:147px;height:35px;line-height:35px;text-align:right">46047</div>
<div style="left:513px;top:690px;width:523px;height:35px;background:#f4f4f4"></div>
<div style="left:1037px;top:690px;width:119px;height:35px;background:#ffffff"></div>
<div style="left:1157px;top:690px;width:179px;height:35px;background:#f4f4f4"></div>
<div style="left:1337px;top:690px;width:269px;height:35px;background:#ffffff"></div>
<div style="left:1607px;top:690px;width:119px;height:35px;background:#ffffff"></div>
<div style="left:1727px;top:690px;width:149px;height:35px;background:#f4f4f4"></div>
<div style="left:1877px;top:690px;width:149px;height:35px;background:#f4f4f4"></div>
<div style="left:2027px;top:690px;width:119px;height:35px;background:#ffffff"></div>
<div style="left:2147px;top:690px;width:149px;height:35px;background:#ffffff"></div>
<div style="left:2297px;top:690px;width:149px;height:35px;background:#f4f4f4"></div>
<div style="left:2447px;top:690px;width:64px;height:35px;background:#f4f4f4"></div>
<div style="left:512px;top:725px;width:1999px;height:1px;background:#d9d9d9"></div>
<div style="left:512px;top:689px;width:1px;height:37px;background:#d9d9d9"></div>
<div style="left:1036px;top:689px;width:1px;height:37px;background:#d9d9d9"></div>
<div style="left:1156px;top:689px;width:1px;height:37px;background:#d9d9d9"></div>
<div style="left:1336px;top:689px;width:1px;height:37px;background:#d9d9d9"></div>
<div style="left:1606px;top:689px;width:1px;height:37px;background:#d9d9d9"></div>
<div style="left:1726px;top:689px;width:1px;height:37px;background:#d9d9d9"></div>
<div style="left:1876px;top:689px;width:1px;height:37px;background:#d9d9d9"></div>
<div style="left:2026px;top:689px;width:1px;height:37px;background:#d9d9d9"></div>
<div style="left:2146px;top:689px;width:1px;height:37px;background:#d9d9d9"></div>
<div style="left:2296px;top:689px;width:1px;height:37px;background:#d9d9d9"></div>
<div style="left:2446px;top:689px;width:1px;height:37px;background:#d9d9d9"></div>
<svg style="position:absolute;left:532px;top:696px" width="18" height="22"><g transform="translate(0,3)"><polygon points="4.5,0 11.5,0 16,4.5 16,11.5 11.5,16 4.5,16 0,11.5 0,4.5" fill="#22ab37"/></g><rect x="3" y="10" width="10" height="2" fill="#fff"/><rect x="7" y="6" width="2" height="10" fill="#fff"/></svg>
<div style="left:554px;top:695px;width:24px;height:24px;border-radius:4px;background:#f05454;color:#fff;font-size:19px;line-height:24px;text-align:center">扩</div>
<div class="t" style="left:581px;top:690px;width:420px;height:35px;line-height:35px;color:#000"><span class="c">基础工程</span><span style="letter-spacing:-1.6px">.</span><span class="c">混凝土工程</span><span style="letter-spacing:-1.6px">.</span><span class="c">灌注桩浇灌</span></div>
<div class="t" style="left:1037px;top:690px;width:120px;height:35px;line-height:35px;text-align:center">m³</div>
<div class="t" style="left:1161px;top:690px;width:170px;height:35px;line-height:35px;"><span class="c">线路取费表</span></div>
<div class="t" style="left:1606px;top:690px;width:117px;height:35px;line-height:35px;text-align:right">13.24</div>
<div class="t" style="left:1726px;top:690px;width:147px;height:35px;line-height:35px;text-align:right">1105.924</div>
<div class="t" style="left:1876px;top:690px;width:147px;height:35px;line-height:35px;text-align:right">14642</div>
<div class="t" style="left:2026px;top:690px;width:117px;height:35px;line-height:35px;text-align:right">13.24</div>
<div class="t" style="left:2146px;top:690px;width:147px;height:35px;line-height:35px;text-align:right">1105.924</div>
<div class="t" style="left:2296px;top:690px;width:147px;height:35px;line-height:35px;text-align:right">14642</div>
<div style="left:513px;top:726px;width:523px;height:35px;background:#f4f4f4"></div>
<div style="left:1037px;top:726px;width:119px;height:35px;background:#ffffff"></div>
<div style="left:1157px;top:726px;width:179px;height:35px;background:#f4f4f4"></div>
<div style="left:1337px;top:726px;width:269px;height:35px;background:#ffffff"></div>
<div style="left:1607px;top:726px;width:119px;height:35px;background:#ffffff"></div>
<div style="left:1727px;top:726px;width:149px;height:35px;background:#f4f4f4"></div>
<div style="left:1877px;top:726px;width:149px;height:35px;background:#f4f4f4"></div>
<div style="left:2027px;top:726px;width:119px;height:35px;background:#ffffff"></div>
<div style="left:2147px;top:726px;width:149px;height:35px;background:#ffffff"></div>
<div style="left:2297px;top:726px;width:149px;height:35px;background:#f4f4f4"></div>
<div style="left:2447px;top:726px;width:64px;height:35px;background:#f4f4f4"></div>
<div style="left:512px;top:761px;width:1999px;height:1px;background:#d9d9d9"></div>
<div style="left:512px;top:725px;width:1px;height:37px;background:#d9d9d9"></div>
<div style="left:1036px;top:725px;width:1px;height:37px;background:#d9d9d9"></div>
<div style="left:1156px;top:725px;width:1px;height:37px;background:#d9d9d9"></div>
<div style="left:1336px;top:725px;width:1px;height:37px;background:#d9d9d9"></div>
<div style="left:1606px;top:725px;width:1px;height:37px;background:#d9d9d9"></div>
<div style="left:1726px;top:725px;width:1px;height:37px;background:#d9d9d9"></div>
<div style="left:1876px;top:725px;width:1px;height:37px;background:#d9d9d9"></div>
<div style="left:2026px;top:725px;width:1px;height:37px;background:#d9d9d9"></div>
<div style="left:2146px;top:725px;width:1px;height:37px;background:#d9d9d9"></div>
<div style="left:2296px;top:725px;width:1px;height:37px;background:#d9d9d9"></div>
<div style="left:2446px;top:725px;width:1px;height:37px;background:#d9d9d9"></div>
<svg style="position:absolute;left:532px;top:732px" width="18" height="22"><g transform="translate(0,3)"><polygon points="4.5,0 11.5,0 16,4.5 16,11.5 11.5,16 4.5,16 0,11.5 0,4.5" fill="#22ab37"/></g><rect x="3" y="10" width="10" height="2" fill="#fff"/><rect x="7" y="6" width="2" height="10" fill="#fff"/></svg>
<div style="left:554px;top:731px;width:24px;height:24px;border-radius:4px;background:#f05454;color:#fff;font-size:19px;line-height:24px;text-align:center">扩</div>
<div class="t" style="left:581px;top:726px;width:420px;height:35px;line-height:35px;color:#000"><span class="c">基础工程</span><span style="letter-spacing:-1.6px">.</span><span class="c">混凝土工程</span><span style="letter-spacing:-1.6px">.</span><span class="c">灌注桩浇灌</span></div>
<div class="t" style="left:1037px;top:726px;width:120px;height:35px;line-height:35px;text-align:center">m³</div>
<div class="t" style="left:1161px;top:726px;width:170px;height:35px;line-height:35px;"><span class="c">线路取费表</span></div>
<div class="t" style="left:1606px;top:726px;width:117px;height:35px;line-height:35px;text-align:right">506.32</div>
<div class="t" style="left:1726px;top:726px;width:147px;height:35px;line-height:35px;text-align:right">1073.293</div>
<div class="t" style="left:1876px;top:726px;width:147px;height:35px;line-height:35px;text-align:right">543430</div>
<div class="t" style="left:2026px;top:726px;width:117px;height:35px;line-height:35px;text-align:right">506.32</div>
<div class="t" style="left:2146px;top:726px;width:147px;height:35px;line-height:35px;text-align:right">1073.293</div>
<div class="t" style="left:2296px;top:726px;width:147px;height:35px;line-height:35px;text-align:right">543430</div>
<div style="left:513px;top:762px;width:523px;height:35px;background:#f4f4f4"></div>
<div style="left:1037px;top:762px;width:119px;height:35px;background:#ffffff"></div>
<div style="left:1157px;top:762px;width:179px;height:35px;background:#f4f4f4"></div>
<div style="left:1337px;top:762px;width:269px;height:35px;background:#ffffff"></div>
<div style="left:1607px;top:762px;width:119px;height:35px;background:#ffffff"></div>
<div style="left:1727px;top:762px;width:149px;height:35px;background:#f4f4f4"></div>
<div style="left:1877px;top:762px;width:149px;height:35px;background:#f4f4f4"></div>
<div style="left:2027px;top:762px;width:119px;height:35px;background:#ffffff"></div>
<div style="left:2147px;top:762px;width:149px;height:35px;background:#ffffff"></div>
<div style="left:2297px;top:762px;width:149px;height:35px;background:#f4f4f4"></div>
<div style="left:2447px;top:762px;width:64px;height:35px;background:#f4f4f4"></div>
<div style="left:512px;top:797px;width:1999px;height:1px;background:#d9d9d9"></div>
<div style="left:512px;top:761px;width:1px;height:37px;background:#d9d9d9"></div>
<div style="left:1036px;top:761px;width:1px;height:37px;background:#d9d9d9"></div>
<div style="left:1156px;top:761px;width:1px;height:37px;background:#d9d9d9"></div>
<div style="left:1336px;top:761px;width:1px;height:37px;background:#d9d9d9"></div>
<div style="left:1606px;top:761px;width:1px;height:37px;background:#d9d9d9"></div>
<div style="left:1726px;top:761px;width:1px;height:37px;background:#d9d9d9"></div>
<div style="left:1876px;top:761px;width:1px;height:37px;background:#d9d9d9"></div>
<div style="left:2026px;top:761px;width:1px;height:37px;background:#d9d9d9"></div>
<div style="left:2146px;top:761px;width:1px;height:37px;background:#d9d9d9"></div>
<div style="left:2296px;top:761px;width:1px;height:37px;background:#d9d9d9"></div>
<div style="left:2446px;top:761px;width:1px;height:37px;background:#d9d9d9"></div>
<svg style="position:absolute;left:532px;top:768px" width="18" height="22"><g transform="translate(0,3)"><polygon points="4.5,0 11.5,0 16,4.5 16,11.5 11.5,16 4.5,16 0,11.5 0,4.5" fill="#22ab37"/></g><rect x="3" y="10" width="10" height="2" fill="#fff"/><rect x="7" y="6" width="2" height="10" fill="#fff"/></svg>
<div style="left:554px;top:767px;width:24px;height:24px;border-radius:4px;background:#f05454;color:#fff;font-size:19px;line-height:24px;text-align:center">扩</div>
<div class="t" style="left:581px;top:762px;width:420px;height:35px;line-height:35px;color:#000"><span class="c">基础工程</span><span style="letter-spacing:-1.6px">.</span><span class="c">混凝土工程</span><span style="letter-spacing:-1.6px">.</span><span class="c">保护帽</span></div>
<div class="t" style="left:1037px;top:762px;width:120px;height:35px;line-height:35px;text-align:center">m³</div>
<div class="t" style="left:1161px;top:762px;width:170px;height:35px;line-height:35px;"><span class="c">线路取费表</span></div>
<div class="t" style="left:1606px;top:762px;width:117px;height:35px;line-height:35px;text-align:right">4.96</div>
<div class="t" style="left:1726px;top:762px;width:147px;height:35px;line-height:35px;text-align:right">1832.478</div>
<div class="t" style="left:1876px;top:762px;width:147px;height:35px;line-height:35px;text-align:right">9089</div>
<div class="t" style="left:2026px;top:762px;width:117px;height:35px;line-height:35px;text-align:right">4.96</div>
<div class="t" style="left:2146px;top:762px;width:147px;height:35px;line-height:35px;text-align:right">1832.478</div>
<div class="t" style="left:2296px;top:762px;width:147px;height:35px;line-height:35px;text-align:right">9089</div>
<div style="left:521px;top:294px;width:1px;height:483px;background:repeating-linear-gradient(to bottom,#000 0 2.6px,transparent 2.6px 6px)"></div>
<div style="left:521px;top:311px;width:9px;height:1px;background:repeating-linear-gradient(to right,#000 0 3px,transparent 3px 6px)"></div>
<div style="left:521px;top:419px;width:9px;height:1px;background:repeating-linear-gradient(to right,#000 0 3px,transparent 3px 6px)"></div>
<div style="left:521px;top:455px;width:9px;height:1px;background:repeating-linear-gradient(to right,#000 0 3px,transparent 3px 6px)"></div>
<div style="left:521px;top:491px;width:9px;height:1px;background:repeating-linear-gradient(to right,#000 0 3px,transparent 3px 6px)"></div>
<div style="left:521px;top:527px;width:9px;height:1px;background:repeating-linear-gradient(to right,#000 0 3px,transparent 3px 6px)"></div>
<div style="left:521px;top:563px;width:9px;height:1px;background:repeating-linear-gradient(to right,#000 0 3px,transparent 3px 6px)"></div>
<div style="left:521px;top:599px;width:9px;height:1px;background:repeating-linear-gradient(to right,#000 0 3px,transparent 3px 6px)"></div>
<div style="left:521px;top:635px;width:9px;height:1px;background:repeating-linear-gradient(to right,#000 0 3px,transparent 3px 6px)"></div>
<div style="left:521px;top:671px;width:9px;height:1px;background:repeating-linear-gradient(to right,#000 0 3px,transparent 3px 6px)"></div>
<div style="left:521px;top:707px;width:9px;height:1px;background:repeating-linear-gradient(to right,#000 0 3px,transparent 3px 6px)"></div>
<div style="left:521px;top:743px;width:9px;height:1px;background:repeating-linear-gradient(to right,#000 0 3px,transparent 3px 6px)"></div>
<div style="left:521px;top:779px;width:9px;height:1px;background:repeating-linear-gradient(to right,#000 0 3px,transparent 3px 6px)"></div>
<div style="left:539px;top:330px;width:1px;height:51px;background:repeating-linear-gradient(to bottom,#000 0 2.6px,transparent 2.6px 6px)"></div>
<div style="left:539px;top:347px;width:9px;height:1px;background:repeating-linear-gradient(to right,#000 0 3px,transparent 3px 6px)"></div>
<div style="left:539px;top:383px;width:9px;height:1px;background:repeating-linear-gradient(to right,#000 0 3px,transparent 3px 6px)"></div>
<div style="left:512px;top:967px;width:1999px;height:36px;background:#f0f0f0"></div>
<div style="left:538px;top:974px;width:1804px;height:11px;background:#878787"></div>
<div style="left:1490px;top:992px;width:77px;height:11px;background:#5a9e2e"></div>
<svg style="position:absolute;left:1515px;top:992px" width="27" height="11"><path d="M0 0 L27 0 L13.5 11Z" fill="#3c6e1e"/></svg>
<div style="left:512px;top:1003px;width:1999px;height:183px;background:#fff"></div>
<div style="left:523px;top:1011px;width:82px;height:29px;background:#a9a9a9"></div>
<div style="left:606px;top:1011px;width:1px;height:29px;background:#d0d0d0"></div>
<div class="t" style="left:525px;top:1011px;width:82px;height:29px;line-height:29px;color:#f4f4f4;text-align:center"><span class="c">工作内容</span></div>
<div style="left:512px;top:1043px;width:1999px;height:1px;background:#c9c4c9"></div>
<div style="left:512px;top:1043px;width:1px;height:143px;background:#c8c8c8"></div>
<div class="t" style="left:519px;top:1046px;width:400px;height:36px;line-height:36px;color:#111;font-size:22px">杆塔类型<span style="display:inline-block;width:22px;padding-left:4px;box-sizing:border-box">:</span>直线自立塔</div>
<div style="left:511px;top:994px;width:271px;height:112px;border:1px solid #e4202a"></div>
</body></html>
